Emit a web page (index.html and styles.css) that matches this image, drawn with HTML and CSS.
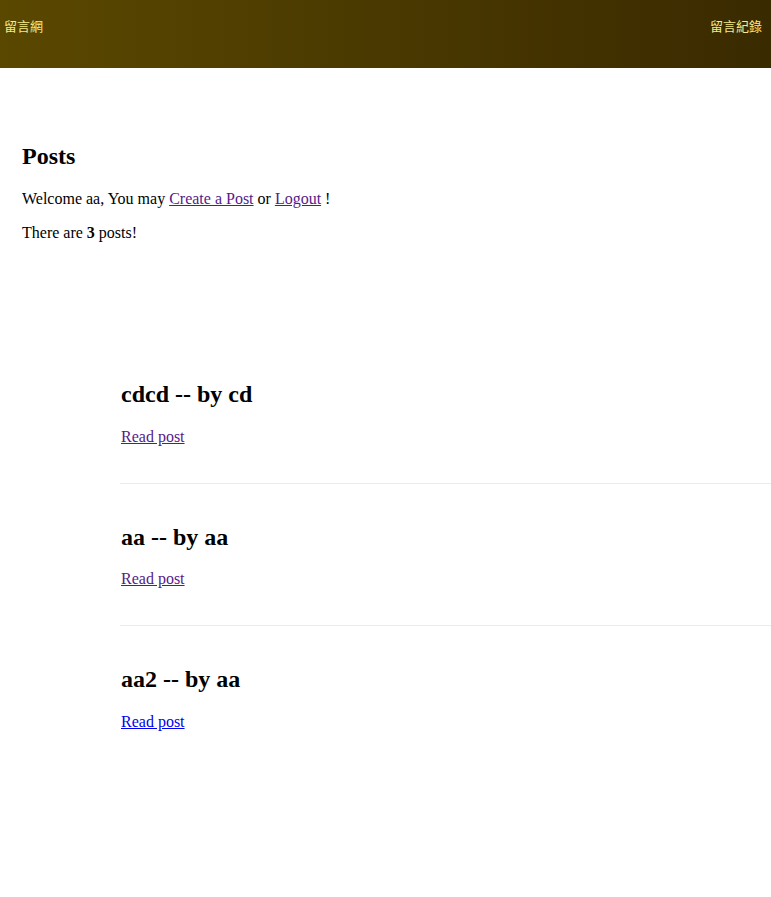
FILE: index.html
```html
<!DOCTYPE html>
<html lang="zh-Hant">
<head>
<meta charset="utf-8">
<title>留言網</title>
<link rel="stylesheet" href="styles.css">
</head>
<body>
<header class="topbar">
  <span class="brand">留言網</span>
  <span class="nav-link">留言紀錄</span>
</header>
<main class="content">
  <h2 class="title">Posts</h2>
  <p class="text">Welcome aa, You may <a class="link visited" href="#create">Create a Post</a> or <a class="link visited" href="#logout">Logout</a> !</p>
  <p class="text">There are <b>3</b> posts!</p>
  <ul class="post-list">
    <li class="post">
      <h2 class="post-title">cdcd -- by cd</h2>
      <p class="text"><a class="link visited" href="#p1">Read post</a></p>
    </li>
    <li class="post">
      <h2 class="post-title">aa -- by aa</h2>
      <p class="text"><a class="link visited" href="#p2">Read post</a></p>
    </li>
    <li class="post">
      <h2 class="post-title">aa2 -- by aa</h2>
      <p class="text"><a class="link" href="#p3">Read post</a></p>
    </li>
  </ul>
</main>
</body>
</html>
```
FILE: styles.css
```css
html, body {
  margin: 0;
  padding: 0;
  background: #ffffff;
}
body {
  font-family: "Liberation Serif", "Times New Roman", serif;
  font-size: 16px;
  color: #000000;
}
.topbar {
  height: 68px;
  box-sizing: border-box;
  display: flex;
  justify-content: space-between;
  align-items: flex-start;
  padding: 16px 9px 0 4px;
  background: linear-gradient(to right, #5a4800, #3a2a00);
  font-family: "Noto Sans CJK TC", "Noto Sans", sans-serif;
  font-size: 13px;
  line-height: 19px;
  color: #f5ea8a;
}
.content {
  padding: 55px 0 0 22px;
}
.title {
  font-size: 24px;
  font-weight: bold;
  margin: 19.92px 0;
}
.text {
  margin: 16px 0;
}
.link {
  color: #0000ee;
  text-decoration: underline;
}
.link.visited {
  color: #551a8b;
}
.post-list {
  list-style: none;
  margin: 99px 0 0 0;
  padding: 0 0 0 98px;
}
.post {
  padding: 20px 0 21px 1px;
  border-bottom: 1px solid #ebebeb;
}
.post:last-child {
  border-bottom: none;
}
.post-title {
  font-size: 24px;
  font-weight: bold;
  margin: 19.92px 0;
}
```
